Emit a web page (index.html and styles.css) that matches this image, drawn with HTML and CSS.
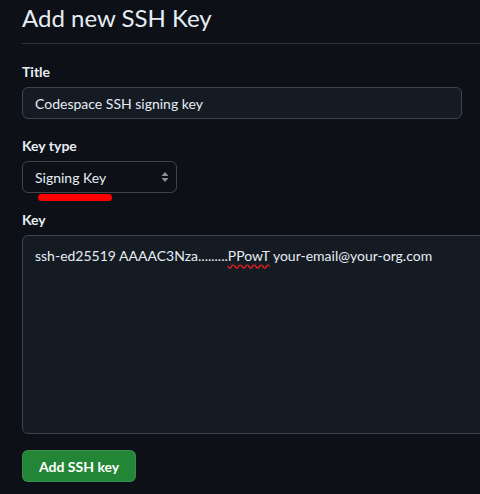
FILE: index.html
```html
<!DOCTYPE html>
<html lang="en">
<head>
<meta charset="utf-8">
<title>Add new SSH Key</title>
<link rel="stylesheet" href="styles.css">
</head>
<body>
<main class="page">
  <h1 class="heading">Add new SSH Key</h1>
  <form class="form">
    <div class="field">
      <label class="label">Title</label>
      <div class="input">Codespace SSH signing key</div>
    </div>
    <div class="field">
      <label class="label">Key type</label>
      <div class="select-wrap">
        <div class="select">
          <span>Signing Key</span>
          <svg class="arrows" width="8" height="12" viewBox="0 0 8 12" aria-hidden="true">
            <path d="M4 1 L7.5 5 H0.5 Z M4 11 L0.5 7 H7.5 Z" fill="#8b949e"/>
          </svg>
        </div>
        <span class="marker"></span>
      </div>
    </div>
    <div class="field">
      <label class="label">Key</label>
      <div class="textarea">ssh-ed25519 AAAAC3Nza.........<span class="misspelled">PPowT</span> your-email@your-org.com</div>
    </div>
    <div class="actions">
      <button type="button" class="btn-primary">Add SSH key</button>
    </div>
  </form>
</main>
</body>
</html>
```
FILE: styles.css
```css
html, body {
  margin: 0;
  padding: 0;
  background: #0d1117;
  overflow: hidden;
}
body {
  font-family: Lato, "Noto Sans", sans-serif;
  color: #e6edf3;
  font-size: 14px;
  line-height: 1.5;
}
.page {
  width: 560px;
  padding: 0 0 0 22px;
}
.heading {
  margin: 0;
  font-size: 24px;
  font-weight: 400;
  line-height: 36px;
  padding-bottom: 7px;
  border-bottom: 1px solid #30363d;
}
.form {
  display: flex;
  flex-direction: column;
  gap: 16px;
  padding-top: 17px;
}
.field {
  display: flex;
  flex-direction: column;
  align-items: flex-start;
  gap: 5px;
}
.label {
  font-weight: 700;
  font-size: 14px;
  line-height: 21px;
}
.input {
  box-sizing: border-box;
  width: 440px;
  height: 32px;
  padding: 0 12px;
  display: flex;
  align-items: center;
  background: #151b23;
  border: 1px solid #3d444d;
  border-radius: 6px;
}
.select-wrap {
  position: relative;
}
.select {
  box-sizing: border-box;
  width: 155px;
  height: 32px;
  padding: 0 7px 0 12px;
  display: flex;
  align-items: center;
  justify-content: space-between;
  background: #0d1117;
  border: 1px solid #3d444d;
  border-radius: 6px;
}
.marker {
  position: absolute;
  left: 16px;
  top: 33px;
  width: 74px;
  height: 7px;
  border-radius: 4px;
  background: #ff0000;
}
.textarea {
  box-sizing: border-box;
  width: 520px;
  height: 199px;
  padding: 9px 12px;
  background: #151b23;
  border: 1px solid #3d444d;
  border-radius: 6px;
}
.misspelled {
  text-decoration: underline wavy #e0201c;
  text-decoration-skip-ink: none;
  text-underline-offset: 3px;
}
.actions {
  display: flex;
}
.btn-primary {
  box-sizing: border-box;
  height: 32px;
  padding: 0 16px;
  font-family: inherit;
  font-size: 14px;
  font-weight: 700;
  color: #ffffff;
  background: #238636;
  border: 1px solid rgba(240, 246, 252, 0.1);
  border-radius: 6px;
}
```
